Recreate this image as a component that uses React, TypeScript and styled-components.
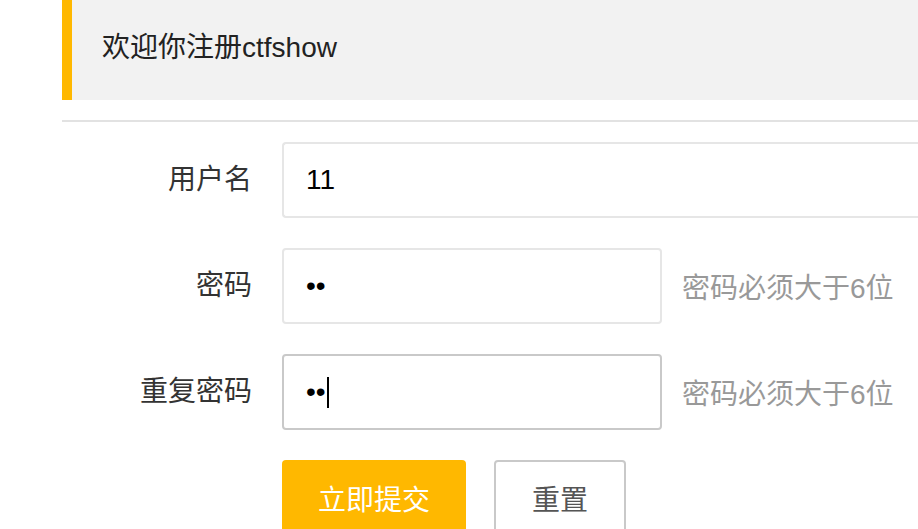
import React from 'react';
import styled, { createGlobalStyle } from 'styled-components';

const GlobalStyle = createGlobalStyle`
  html, body {
    margin: 0;
    padding: 0;
    background: #fff;
    overflow: hidden;
  }
  body {
    font-family: "Liberation Sans", "Noto Sans CJK SC", sans-serif;
    color: #333;
  }
`;

const Page = styled.div`
  box-sizing: border-box;
  width: 100%;
  padding-left: 62px;
  overflow: hidden;
`;

const Quote = styled.div`
  background: #f2f2f2;
  border-left: 10px solid #ffb800;
  padding: 26px 30px 30px;
  font-size: 28px;
  line-height: 44px;
  color: #222;
`;

const Rule = styled.div`
  height: 2px;
  background: #e2e2e2;
  margin: 20px 0;
`;

const Form = styled.form`
  display: flex;
  flex-direction: column;
  gap: 30px;
`;

const Item = styled.div`
  display: flex;
  align-items: center;
`;

const Label = styled.label`
  width: 160px;
  padding: 0 30px;
  text-align: right;
  font-size: 28px;
  line-height: 76px;
  color: #333;
  flex-shrink: 0;
`;

const Field = styled.div<{ $width?: number; $focused?: boolean }>`
  box-sizing: border-box;
  height: 76px;
  width: ${({ $width }) => ($width ? `${$width}px` : 'auto')};
  flex: ${({ $width }) => ($width ? '0 0 auto' : '1')};
  border: 2px solid ${({ $focused }) => ($focused ? '#c9c9c9' : '#e6e6e6')};
  border-right-width: ${({ $width }) => ($width ? '2px' : '0')};
  border-radius: ${({ $width }) => ($width ? '4px' : '4px 0 0 4px')};
  background: #fff;
  padding-left: 22px;
  display: flex;
  align-items: center;
  font-size: 28px;
  color: #000;
`;

const Caret = styled.span`
  display: inline-block;
  width: 2px;
  height: 31px;
  background: #000;
  margin-left: 1px;
`;

const Hint = styled.div`
  margin-left: 20px;
  font-size: 28px;
  color: #999;
  white-space: nowrap;
`;

const Buttons = styled.div`
  display: flex;
  gap: 28px;
  padding-left: 220px;
`;

const Button = styled.button<{ $primary?: boolean }>`
  box-sizing: border-box;
  height: 76px;
  padding: 0 36px;
  border-radius: 4px;
  font-family: inherit;
  font-size: 28px;
  cursor: pointer;
  background: ${({ $primary }) => ($primary ? '#ffb800' : '#fff')};
  color: ${({ $primary }) => ($primary ? '#fff' : '#555')};
  border: ${({ $primary }) => ($primary ? 'none' : '2px solid #c9c9c9')};
`;

export default function App() {
  return (
    <>
      <GlobalStyle />
      <Page>
        <Quote>欢迎你注册ctfshow</Quote>
        <Rule />
        <Form onSubmit={(e) => e.preventDefault()}>
          <Item>
            <Label>用户名</Label>
            <Field>11</Field>
          </Item>
          <Item>
            <Label>密码</Label>
            <Field $width={380}>••</Field>
            <Hint>密码必须大于6位</Hint>
          </Item>
          <Item>
            <Label>重复密码</Label>
            <Field $width={380} $focused>
              ••<Caret />
            </Field>
            <Hint>密码必须大于6位</Hint>
          </Item>
          <Buttons>
            <Button $primary type="submit">立即提交</Button>
            <Button type="reset">重置</Button>
          </Buttons>
        </Form>
      </Page>
    </>
  );
}
